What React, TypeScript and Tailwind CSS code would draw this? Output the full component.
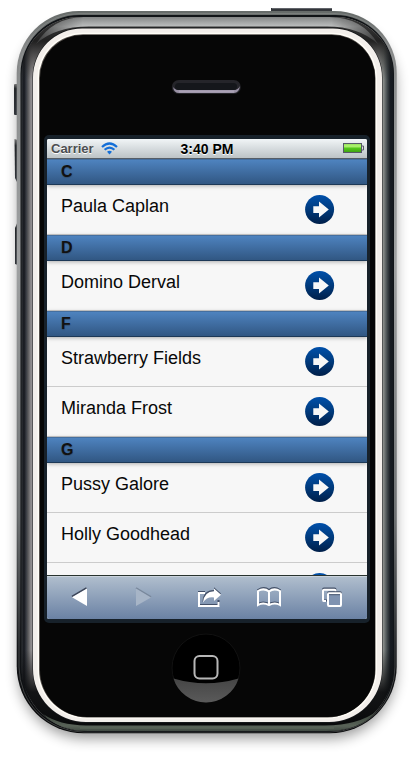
type Section = { letter: string; names: string[] };

const sections: Section[] = [
  { letter: "C", names: ["Paula Caplan"] },
  { letter: "D", names: ["Domino Derval"] },
  { letter: "F", names: ["Strawberry Fields", "Miranda Frost"] },
  { letter: "G", names: ["Pussy Galore", "Holly Goodhead", ""] },
];

// Rounded rectangle with separate radii for the top and bottom corners.
function rr(l: number, t: number, r: number, b: number, rt: number, rb: number) {
  return `M${l + rt} ${t}H${r - rt}A${rt} ${rt} 0 0 1 ${r} ${t + rt}V${b - rb}A${rb} ${rb} 0 0 1 ${r - rb} ${b}H${l + rb}A${rb} ${rb} 0 0 1 ${l} ${b - rb}V${t + rt}A${rt} ${rt} 0 0 1 ${l + rt} ${t}Z`;
}

function PhoneCase() {
  return (
    <svg className="absolute inset-0" width="414" height="770" viewBox="0 0 414 770">
      <defs>
        <filter id="blur" x="-10%" y="-10%" width="120%" height="120%">
          <feGaussianBlur stdDeviation="7" />
        </filter>
        <linearGradient id="rim" x2="0" y2="1">
          <stop offset="0" stopColor="#666b69" />
          <stop offset=".05" stopColor="#858787" />
          <stop offset=".35" stopColor="#a0a2a3" />
          <stop offset=".7" stopColor="#65686a" />
          <stop offset=".88" stopColor="#15171a" />
          <stop offset="1" stopColor="#08090a" />
        </linearGradient>
        <linearGradient id="chrome" x2="0" y2="1">
          <stop offset="0" stopColor="#838585" />
          <stop offset=".2" stopColor="#a5a7a7" />
          <stop offset=".35" stopColor="#bcbebe" />
          <stop offset="1" stopColor="#999b9b" />
        </linearGradient>
        <linearGradient id="fade" gradientUnits="userSpaceOnUse" x1="34" x2="380" y1="0" y2="0">
          <stop offset="0" stopColor="#fff" stopOpacity=".15" />
          <stop offset=".14" stopColor="#fff" />
          <stop offset=".86" stopColor="#fff" />
          <stop offset="1" stopColor="#fff" stopOpacity=".15" />
        </linearGradient>
        <mask id="ends" maskUnits="userSpaceOnUse" x="0" y="0" width="414" height="770">
          <rect width="414" height="770" fill="url(#fade)" />
        </mask>
        <linearGradient id="sides" gradientUnits="userSpaceOnUse" x1="21" y1="0" x2="394" y2="0">
          <stop offset="0" stopColor="#373a3e" />
          <stop offset=".008" stopColor="#15171d" />
          <stop offset=".014" stopColor="#393c43" />
          <stop offset=".019" stopColor="#59595b" />
          <stop offset=".026" stopColor="#8b888a" />
          <stop offset=".032" stopColor="#9b9899" />
          <stop offset=".96" stopColor="#b5b5b2" />
          <stop offset=".972" stopColor="#858986" />
          <stop offset=".982" stopColor="#41484b" />
          <stop offset=".99" stopColor="#171c22" />
          <stop offset="1" stopColor="#12171d" />
        </linearGradient>
        <linearGradient id="shade" gradientUnits="userSpaceOnUse" x1="0" y1="27" x2="0" y2="727">
          <stop offset="0" stopColor="#333" />
          <stop offset=".02" stopColor="#1a1a1a" stopOpacity=".95" />
          <stop offset=".075" stopColor="#222" stopOpacity="0" />
          <stop offset=".89" stopColor="#111" stopOpacity="0" />
          <stop offset=".95" stopColor="#0c0d0f" stopOpacity=".95" />
          <stop offset="1" stopColor="#08090a" />
        </linearGradient>
        <linearGradient id="green" x2="0" y2="1">
          <stop offset="0" stopColor="#374038" />
          <stop offset=".75" stopColor="#596358" />
          <stop offset="1" stopColor="#414a43" />
        </linearGradient>
        <linearGradient id="button" x2="0" y2="1">
          <stop offset="0" stopColor="#454545" />
          <stop offset="1" stopColor="#5a5a5a" />
        </linearGradient>
        <linearGradient id="key" x2="0" y2="1">
          <stop offset="0" stopColor="#777" />
          <stop offset=".15" stopColor="#24272a" />
          <stop offset="1" stopColor="#30343a" />
        </linearGradient>
      </defs>

      <path d={rr(19, 24, 395, 738, 60, 66)} fill="#000" opacity=".42" filter="url(#blur)" />

      <rect x="14" y="84" width="4" height="31" rx="1" fill="url(#key)" />
      <path d="M14.5 139L18 140V184L15 178Z" fill="url(#key)" />
      <path d="M18 221L15 228V264L18 265Z" fill="url(#key)" />
      <path d="M271 8H332V13H271Z" fill="#33363a" />
      <path d="M272 8.5H332" stroke="#62656b" />

      <path d={rr(16.7, 11, 396.7, 733.3, 62, 67)} fill="url(#rim)" />
      <path d={rr(19, 13.5, 395, 732, 60, 65)} fill="none" stroke="#999d9d" strokeWidth=".8" opacity=".45" />
      <path d={rr(20.5, 15, 394, 731.5, 59, 65)} fill="#101316" />
      <path d={rr(21.5, 17, 393.5, 731, 58, 64)} fill="url(#sides)" />
      <path d={rr(21.5, 17, 393.5, 731, 58, 64)} fill="url(#shade)" />
      <path d="M36 44Q53 17 84 17H329Q362 17 378 44Q359 26.5 327 26.5H89Q55 26.5 36 44Z" fill="url(#chrome)" mask="url(#ends)" />
      <path d="M43 714Q59 725 86 725.5H325Q359 725 377 711Q360 731 326 731H88Q59 731 43 714Z" fill="url(#green)" />
      <path d="M80 728H334" stroke="#647061" opacity=".7" />

      <path d={rr(32.5, 27.5, 382.5, 723, 50, 54)} fill="#16181a" />
      <path d={rr(33, 28.5, 382, 722, 49, 53)} fill="#f3efeb" />
      <path d={rr(37.5, 32.8, 377, 718.5, 45, 49)} fill="#fffdf7" />
      <path d={rr(39, 34.2, 375.5, 717.4, 44, 48)} fill="#55504c" />
      <path d={rr(40, 35, 375, 717, 43, 47)} fill="#060606" />

      <rect x="171.8" y="80" width="69" height="14" rx="7" fill="#25252a" />
      <path d="M173 87Q174 93 179 93H234Q239 93 240 86Q238 90 234 90H179Q175 90 173 87Z" fill="#9991a5" />
      <path d="M179 91.5H234" stroke="#aaa1b5" strokeWidth="2" />
      <rect x="175" y="83" width="62" height="7" rx="3.5" fill="#15171b" />

      <circle cx="206" cy="668" r="34" fill="#000" stroke="#111" />
      <path d="M173.5 678.5Q206 688 238.5 678.5A34 34 0 0 1 173.5 678.5Z" fill="url(#button)" />
      <rect x="194.5" y="656" width="23" height="22.5" rx="5" fill="#000" stroke="#b7b7b7" strokeWidth="2" />
    </svg>
  );
}

function WifiIcon() {
  return (
    <svg className="ml-[7px]" width="17" height="13" viewBox="0 0 17 13" fill="none" stroke="#146fd8" strokeWidth="2.2">
      <path d="M1 5Q8.5 -2 16 5" />
      <path d="M3.6 7.8Q8.5 3.4 13.4 7.8" />
      <path d="M6 9.8Q8.5 7.6 11 9.8L8.5 12.4Z" fill="#146fd8" stroke="none" />
    </svg>
  );
}

function BatteryIcon() {
  return (
    <svg width="22" height="11" viewBox="0 0 22 11">
      <defs>
        <linearGradient id="charge" x2="0" y2="1">
          <stop offset="0" stopColor="#8bdc54" />
          <stop offset=".3" stopColor="#b4f576" />
          <stop offset=".55" stopColor="#52c71b" />
          <stop offset="1" stopColor="#3d9f10" />
        </linearGradient>
      </defs>
      <rect x=".5" y=".5" width="18" height="9" fill="url(#charge)" stroke="#555967" />
      <path d="M19 3H20.5V7H19" fill="#ddd" stroke="#555967" />
    </svg>
  );
}

function ArrowBadge() {
  return (
    <svg className="mt-[10px] shrink-0" width="30" height="30" viewBox="0 0 30 30">
      <defs>
        <linearGradient id="badge" x2="0" y2="1">
          <stop offset="0" stopColor="#0050aa" />
          <stop offset=".5" stopColor="#003a7c" />
          <stop offset="1" stopColor="#001f49" />
        </linearGradient>
      </defs>
      <circle cx="14.6" cy="14.5" r="14.5" fill="url(#badge)" />
      <path d="M8.3 11.3H14V6.4L23.8 14.5L14 22.5V17.9H8.3Z" fill="#f7f7f7" />
    </svg>
  );
}

function Toolbar() {
  return (
    <nav className="flex h-11 shrink-0 border-t border-[#28332f] bg-linear-to-b from-[#b1bfce] to-[#6b82a4] shadow-[inset_0_1px_0_#cad3dc]">
      <svg width="320" height="43" viewBox="0 576 320 43">
        <path d="M25 596.5L39.5 588" stroke="#3d465a" strokeWidth="1.8" />
        <path d="M25 597.3L40 588.5V606Z" fill="#fff" />
        <path d="M89 588L104 597" stroke="#79889c" strokeWidth="1.6" />
        <path d="M89 588.5L104 597.5L89 606Z" fill="#a7b5c7" />
        <g fill="none" stroke="#424f67" strokeWidth="2" transform="translate(0 -1)">
          <path d="M158 593H152V606H171.5V601" />
          <path d="M222 591Q217 587 211 591V605Q216 602 222 605Q228 602 233 605V591Q227 587 222 591V605" />
          <rect x="276" y="589.5" width="12.5" height="12" rx="1" />
        </g>
        <path d="M158 593H152V606H171.5V602" fill="none" stroke="#fff" strokeWidth="2" />
        <path d="M155.5 602Q156 590 167 590V587.3L174 593.5L167 600.5V597Q160 596 155.5 602Z" fill="#424f67" />
        <path d="M156 602.5Q157 591.5 167 591.2V588.5L174 594.7L167 601V597.5Q160 596.5 156 602.5Z" fill="#fff" />
        <path d="M222 591.5Q217 587.5 211 591V605Q216 602 222 605Q228 602 233 605V591Q227 587.5 222 591.5V605" fill="none" stroke="#fff" strokeWidth="2" />
        <path d="M279 601H276.5Q276 601 276 600V590.5Q276 589.8 277 589.8H287.5Q288.5 589.8 288.5 590.5V592" fill="none" stroke="#fff" strokeWidth="2" />
        <rect x="281" y="592.2" width="13" height="13" rx="1" fill="none" stroke="#424f67" strokeWidth="2" />
        <rect x="281" y="593.2" width="13" height="12.8" rx="1" fill="#7f93b1" stroke="#fff" strokeWidth="2" />
        <path d="M282 594.7H293" stroke="#4b5972" />
      </svg>
    </nav>
  );
}

export default function App() {
  return (
    <main className="relative flex h-[770px] w-[414px] flex-col overflow-hidden bg-white font-['Liberation_Sans',Arial,sans-serif]">
      <PhoneCase />
      <section className="relative mt-[135px] ml-[44px] h-[488px] w-[326px] rounded-[5px] bg-[#17212a] px-[3px] pt-1 pb-1">
        <div className="flex h-[480px] flex-col overflow-hidden rounded-[2px] bg-[#f7f7f7]">
          <header className="grid h-5 shrink-0 grid-cols-[1fr_auto_1fr] items-center border-b border-[#555d66] bg-linear-to-b from-[#f1f5f7] to-[#bcc3c6] font-bold">
            <div className="flex items-center pl-1 text-[13px] text-[#4b4e51] [text-shadow:0_1px_0_#fff]">
              <span>Carrier</span>
              <WifiIcon />
            </div>
            <span className="text-[14px] leading-[18px] text-black [text-shadow:0_1px_0_#fff]">3:40 PM</span>
            <div className="-mt-px flex justify-end pr-[2px]">
              <BatteryIcon />
            </div>
          </header>
          <div className="min-h-0 flex-1 overflow-hidden">
            {sections.map((s) => (
              <section key={s.letter}>
                <h2 className="relative h-[26px] border-t border-b border-t-[#456f9f] border-b-[#1d3957] bg-linear-to-b from-[#4e83bf] to-[#315783] pl-[14px] text-base leading-[23px] font-bold text-[#111] shadow-[0_1px_4px_rgba(0,0,0,0.3)] [text-shadow:0_1px_1px_#34506f]">
                  {s.letter}
                </h2>
                <ul>
                  {s.names.map((n) => (
                    <li
                      key={n}
                      className="flex h-[50px] justify-between border-b border-[#ccc] pr-[32px] pl-[14px] text-[18px] leading-[42px] text-[#080808]"
                    >
                      <span>{n}</span>
                      <ArrowBadge />
                    </li>
                  ))}
                </ul>
              </section>
            ))}
          </div>
          <Toolbar />
        </div>
      </section>
    </main>
  );
}
